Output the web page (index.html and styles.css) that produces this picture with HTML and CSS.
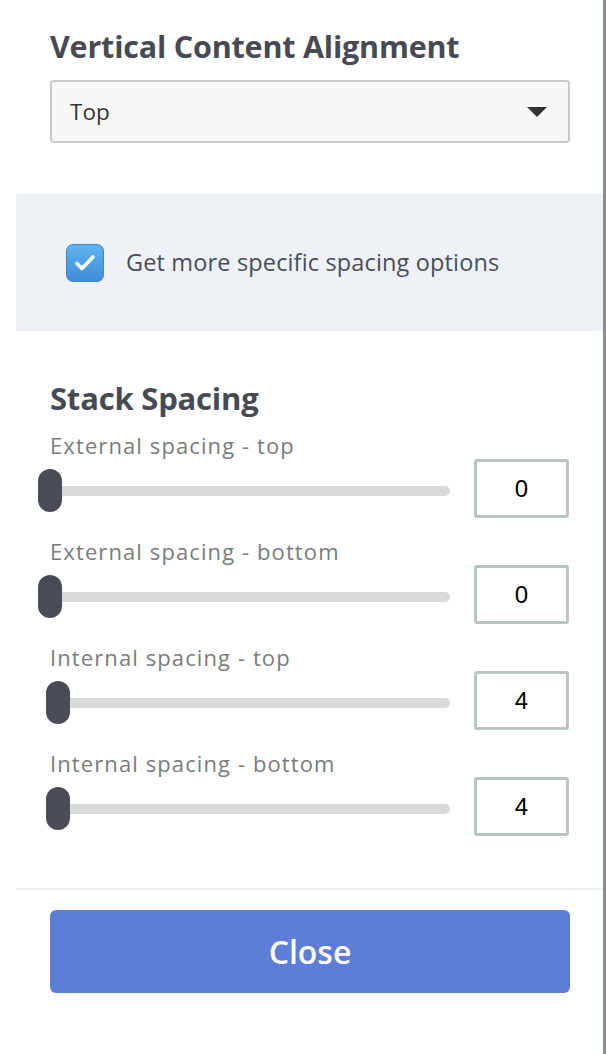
FILE: index.html
```html
<!DOCTYPE html>
<html lang="en">
<head>
    <meta charset="UTF-8">
    <meta name="viewport" content="width=device-width, initial-scale=1.0">
    <title>Stack Settings</title>
    <link rel="stylesheet" href="styles.css">
</head>
<body>
    <div class="sidebar">
        <div class="section">
            <h2 class="title">Vertical Content Alignment</h2>
            <div class="select">
                <span>Top</span>
                <svg width="22" height="12" viewBox="0 0 22 12"><path d="M1 1h20L11 11z" fill="#333"/></svg>
            </div>
        </div>

        <div class="options">
            <span class="checkbox">
                <svg width="22" height="18" viewBox="0 0 22 18"><path d="M3 9.5l5 5L19 3" fill="none" stroke="#fff" stroke-width="3.6" stroke-linecap="round" stroke-linejoin="round"/></svg>
            </span>
            <span class="options-label">Get more specific spacing options</span>
        </div>

        <div class="section">
            <h2 class="title stack-title">Stack Spacing</h2>

            <div class="row">
                <div class="row-label">External spacing - top</div>
                <div class="controls">
                    <div class="slider"><div class="track"></div><div class="thumb" style="left: 0px"></div></div>
                    <input class="num" type="text" value="0">
                </div>
            </div>
            <div class="row">
                <div class="row-label">External spacing - bottom</div>
                <div class="controls">
                    <div class="slider"><div class="track"></div><div class="thumb" style="left: 0px"></div></div>
                    <input class="num" type="text" value="0">
                </div>
            </div>
            <div class="row">
                <div class="row-label">Internal spacing - top</div>
                <div class="controls">
                    <div class="slider"><div class="track"></div><div class="thumb" style="left: 8px"></div></div>
                    <input class="num" type="text" value="4">
                </div>
            </div>
            <div class="row">
                <div class="row-label">Internal spacing - bottom</div>
                <div class="controls">
                    <div class="slider"><div class="track"></div><div class="thumb" style="left: 8px"></div></div>
                    <input class="num" type="text" value="4">
                </div>
            </div>
        </div>

        <div class="divider"></div>

        <div class="section">
            <button class="btn-close">Close</button>
        </div>
    </div>
</body>
</html>
```

FILE: styles.css
```css
body {
    margin: 0;
    padding: 0;
    background: #fff;
    font-family: "Open Sans", Lato, sans-serif;
}
.sidebar {
    width: 606px;
    height: 1054px;
    box-sizing: border-box;
    border-right: 3px solid #8b8e90;
    overflow: hidden;
}
.section {
    padding: 0 33px 0 50px;
}
.title {
    margin: 0;
    padding-top: 27px;
    font-size: 30.5px;
    line-height: 38px;
    font-weight: 700;
    color: #474a53;
    letter-spacing: -0.2px;
}
.stack-title {
    padding-top: 48px;
    font-size: 31px;
}
.select {
    margin-top: 15px;
    height: 63px;
    box-sizing: border-box;
    display: flex;
    align-items: center;
    justify-content: space-between;
    padding: 0 20px 0 18px;
    background: #f8f8f8;
    border: 2px solid #c9c9c9;
    border-radius: 4px;
    font-size: 22.5px;
    color: #333;
}
.options {
    margin: 51px 0 0 16px;
    height: 137px;
    display: flex;
    align-items: center;
    padding-left: 50px;
    background: #eef1f6;
}
.checkbox {
    width: 38px;
    height: 38px;
    box-sizing: border-box;
    display: flex;
    align-items: center;
    justify-content: center;
    border-radius: 7px;
    border: 1px solid #3c84d0;
    background: linear-gradient(#60b4f0, #418cd8);
}
.options-label {
    margin-left: 22px;
    font-size: 23.5px;
    letter-spacing: 0.15px;
    color: #4b4e56;
    margin-top: -2px;
}
.row {
    margin-top: 16px;
}
.row + .row {
    margin-top: 21px;
}
.row-label {
    font-size: 22px;
    line-height: 26px;
    letter-spacing: 1.1px;
    color: #7b7b7b;
    margin-top: -1px;
    margin-bottom: 1px;
}
.controls {
    display: flex;
    align-items: center;
}
.slider {
    position: relative;
    margin-left: -12px;
    width: 412px;
    height: 43px;
    margin-top: 4px;
}
.track {
    position: absolute;
    left: 12px;
    right: 0;
    top: 17px;
    height: 10px;
    border-radius: 5px;
    background: #d9d9d9;
}
.thumb {
    position: absolute;
    top: 0;
    width: 24px;
    height: 43px;
    border-radius: 12px;
    background: #4a4c55;
}
.num {
    margin-left: 24px;
    width: 95px;
    height: 59px;
    box-sizing: border-box;
    border: 3px solid #b9c3c1;
    border-radius: 3px;
    text-align: center;
    font-family: "Liberation Sans", Arial, sans-serif;
    font-size: 24px;
    color: #000;
    background: #fff;
    padding: 0;
}
.divider {
    margin: 52px 0 0 16px;
    height: 2px;
    background: #eef1f4;
}
.btn-close {
    margin-top: 20px;
    width: 100%;
    height: 83px;
    border: none;
    border-radius: 6px;
    background: #5e7dd6;
    color: #fff;
    font-family: "Open Sans", Lato, sans-serif;
    font-size: 32px;
    font-weight: 600;
    cursor: pointer;
}
```
